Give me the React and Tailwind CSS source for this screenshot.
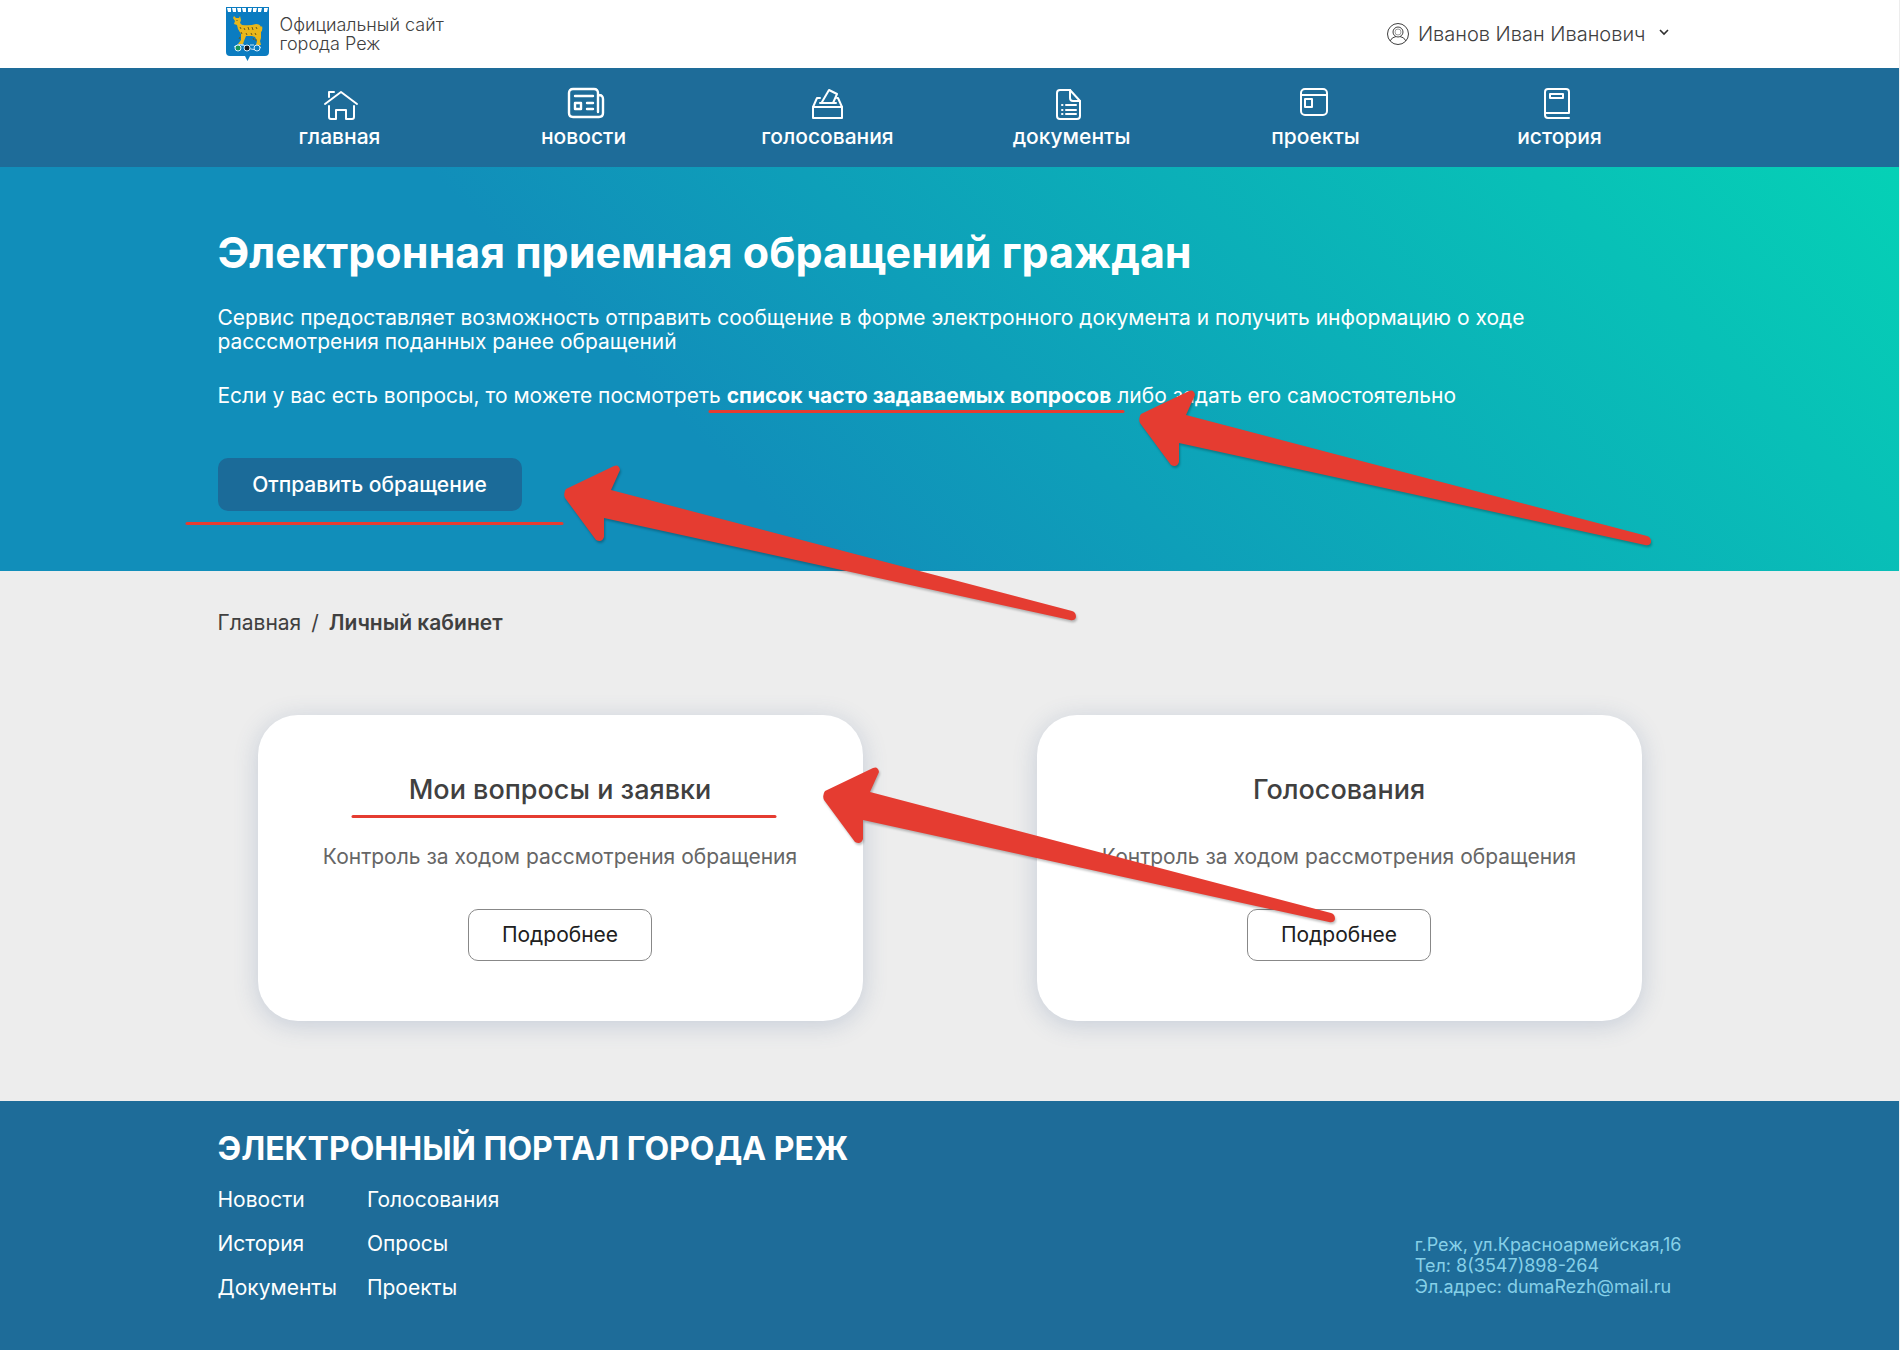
import React from "react";

const NAV = [
  { label: "главная", icon: HomeIcon },
  { label: "новости", icon: NewsIcon },
  { label: "голосования", icon: VoteIcon },
  { label: "документы", icon: DocIcon },
  { label: "проекты", icon: ProjectIcon },
  { label: "история", icon: BookIcon },
];

const CARDS = ["Мои вопросы и заявки", "Голосования"];

const FOOTER_LINKS = [
  ["Новости", "История", "Документы"],
  ["Голосования", "Опросы", "Проекты"],
];

function Icon({ children }) {
  return (
    <svg width="42" height="36" viewBox="-1 0 42 36" fill="none" stroke="white" strokeWidth="2" strokeLinecap="round" strokeLinejoin="round" aria-hidden="true">
      {children}
    </svg>
  );
}

function HomeIcon() {
  return (
    <Icon>
      <path d="M5 19 21 7 37 19" />
      <path d="M9 12V7h5" />
      <path d="M9 21v11q0 2 2 2h5V25h10v9h6q2 0 2-2V21" />
    </Icon>
  );
}

function NewsIcon() {
  return (
    <Icon>
      <path d="M34 27V8q0-4-4-4H9Q5 4 5 8v20q0 4 4 4h26q4 0 4-4V14q0-4-4-4" strokeWidth="2.4" />
      <path d="M11 11h18M23 18h6M23 24h6" strokeWidth="2.4" />
      <path d="M11 18h6v6h-6z" strokeWidth="2.4" />
    </Icon>
  );
}

function VoteIcon() {
  return (
    <Icon>
      <path d="M5 22h29v11H5z" />
      <path d="m5 22 4-9h3M34 22l-4-9h-1M12 18h16" />
      <path d="m14 17 7-12 8 4-4 9" />
    </Icon>
  );
}

function DocIcon() {
  return (
    <Icon>
      <path d="M18 5H8Q5 5 5 8v23q0 3 3 3h17q3 0 3-3V16L18 5" />
      <path d="M18 5v8q0 3 3 3h7M14 20h10M14 25h10M14 29h10M10 20h.500M10 25h.500M10 29h.500" />
    </Icon>
  );
}

function ProjectIcon() {
  return (
    <Icon>
      <rect x="5" y="4" width="26" height="26" rx="4" />
      <path d="M5 10h26" />
      <path d="M9 14h7v8H9z" />
    </Icon>
  );
}

function BookIcon() {
  return (
    <Icon>
      <path d="M29 28V7q0-3-3-3H8Q5 4 5 7v23q0 3 3 3h21M6 28h23" />
      <path d="M10 9h13v4H10z" />
    </Icon>
  );
}

function Emblem() {
  return (
    <svg width="43" height="54" viewBox="0 0 43 54" aria-hidden="true">
      <path d="M0 0h43v45q0 4-4 4H24l-2.500 5-2.500-5H4q-4 0-4-4z" fill="#0b7cc1" />
      <path d="M1 1h4v4H2zM6 1h4v4H7zM11 1h4v4h-3zM16 1h4v4h-3zM22 1h4l-1 4h-3zM27 1h4l-1 4h-3zM32 1h4l-1 4h-3zM38 1h4l-1 4h-3z" fill="white" />
      <path d="m7 11 1-2 2 2h3l1-2 1 4-1 3 2 2q8 1 14-1 4 0 5 3l1-1q1 4-1 6v6l-1 3 1 4h-5l1-4-2-4-3-1h-6l-2 5-1 3h-5l3-4v-6l-3-5-1-4-3-1 1-3z" fill="#e9b71a" />
      <path d="m14 20 1 2m3-1 1 2m3-3 1 3m3-3 1 3m3-3 1 2m-16 3 1 2m4-1 1 2m4-2 1 2m3-2 1 2m-16 2-1 2m14-1 1 2m2-1v2M11 13v1" stroke="#6a5a1a" strokeWidth="1" />
      <path d="M15 38h3m6 0h4M8 40q6-5 13 0t14 0" stroke="#c9e4f5" fill="none" />
      <g stroke="#dbeefa" strokeWidth="1" fill="none">
        <circle cx="12" cy="41" r="3" fill="#15965a" />
        <circle cx="21" cy="41" r="3" fill="#171b22" />
        <circle cx="31" cy="41" r="3" fill="#0b7cc1" />
      </g>
    </svg>
  );
}

function Arrow({ x, y }) {
  return (
    <path
      transform={`translate(${x} ${y})`}
      d="M2-5 50-28q5-2 6 4L47-4 508 117q4 1 4 6-1 4-6 3L40 24v19q-2 6-8 3L1 4q-2-5 1-9z"
    />
  );
}

/* Hand-drawn marks that lie over the page */
function Marks() {
  return (
    <svg className="pointer-events-none absolute top-0 left-1/2 -translate-x-1/2" width="1900" height="1350" viewBox="0 0 1900 1350" aria-hidden="true">
      <g stroke="#e53c31" strokeWidth="3" strokeLinecap="round">
        <path d="M710 411.500H1123" />
        <path d="M187 523.500H562" />
        <path d="M353 816.500H775" />
      </g>
      <g fill="#e53c31" className="drop-shadow-[1px_2px_1px_rgba(0,0,0,0.25)]">
        <Arrow x={1139} y={419} />
        <Arrow x={564} y={494} />
        <Arrow x={823} y={796} />
      </g>
    </svg>
  );
}

export default function App() {
  return (
    <div className="relative min-h-screen overflow-hidden bg-[#ededed] pr-px font-[Inter,'Noto_Sans',sans-serif] text-[#404040]">
      <header className="bg-white">
        <div className="mx-auto flex h-[68px] max-w-[1464px] items-center justify-between pr-3 pl-2">
          <a href="#" className="flex items-center gap-[11px]">
            <Emblem />
            <span className="text-[18px] leading-[19px] font-light">
              Официальный сайт
              <br />
              города Реж
            </span>
          </a>
          <button type="button" className="flex items-center gap-2 text-[20px] font-light">
            <svg width="24" height="24" viewBox="0 0 24 24" fill="none" stroke="#404040" strokeWidth="1" aria-hidden="true">
              <circle cx="12" cy="12" r="10.500" />
              <circle cx="12" cy="10" r="5" />
              <circle cx="12" cy="10" r="3" strokeWidth="0.500" />
              <path d="M4 19q2-4 6-4.500m4 0q4 .500 6 4.500" />
            </svg>
            Иванов Иван Иванович
            <svg className="mb-1 ml-1" width="12" height="12" viewBox="0 0 12 12" fill="none" stroke="#303030" strokeWidth="1.6" aria-hidden="true">
              <path d="m2 4 4 4 4-4" />
            </svg>
          </button>
        </div>
      </header>

      <nav className="bg-[#1e6c99] text-white">
        <div className="mx-auto grid h-[99px] max-w-[1464px] grid-cols-6">
          {NAV.map(({ label, icon: Glyph }) => (
            <a key={label} href="#" className="flex flex-col items-center pt-[17px] text-[21px] leading-[24px] font-medium">
              <Glyph />
              <span className="mt-1">{label}</span>
            </a>
          ))}
        </div>
      </nav>

      <section className="bg-[linear-gradient(45deg,#118eba_36%,#05d1b6_100%)] text-white">
        <div className="mx-auto h-[404px] max-w-[1464px] pt-[60px]">
          <h1 className="text-[43px] leading-[50px] font-bold">Электронная приемная обращений граждан</h1>
          <p className="mt-[29px] max-w-[1360px] text-[21px] leading-[24px]">
            Сервис предоставляет возможность отправить сообщение в форме электронного документа и получить информацию о ходе
            <br />
            расссмотрения поданных ранее обращений
          </p>
          <p className="mt-[30px] text-[21px] leading-[24px]">
            Если у вас есть вопросы, то можете посмотреть{" "}
            <a href="#" className="font-bold">список часто задаваемых вопросов</a> либо задать его самостоятельно
          </p>
          <button type="button" className="mt-[50px] h-[53px] w-[304px] rounded-[10px] bg-[#1b6b99] text-[21px] font-medium">
            Отправить обращение
          </button>
        </div>
      </section>

      <main className="mx-auto max-w-[1464px] pt-10 pb-20">
        <div className="flex gap-[10px] text-[21px] leading-[24px]">
          <a href="#">Главная</a>
          <span>/</span>
          <span className="font-semibold">Личный кабинет</span>
        </div>
        <div className="mt-20 flex justify-between px-10">
          {CARDS.map((title) => (
            <article key={title} className="flex h-[306px] w-[605px] flex-col items-center rounded-[40px] bg-white pt-[60px] shadow-[0_4px_24px_rgba(60,90,140,0.22)]">
              <h2 className="text-[27px] leading-[30px] font-medium">{title}</h2>
              <p className="mt-10 text-[21px] leading-[24px] text-[#666]">Контроль за ходом рассмотрения обращения</p>
              <button type="button" className="mt-10 h-[52px] w-[184px] rounded-[10px] border border-[#888] text-[21px] text-[#202020]">
                Подробнее
              </button>
            </article>
          ))}
        </div>
      </main>

      <footer className="bg-[#1e6c99] text-white">
        <div className="mx-auto h-[249px] max-w-[1464px] pt-[30px]">
          <h2 className="text-[32px] leading-[36px] font-bold">ЭЛЕКТРОННЫЙ ПОРТАЛ ГОРОДА РЕЖ</h2>
          <div className="mt-[21px] flex items-end justify-between">
            <div className="flex gap-[30px] text-[21px] leading-[24px]">
              {FOOTER_LINKS.map((links) => (
                <div key={links[0]} className="flex flex-col gap-5">
                  {links.map((link) => (
                    <a key={link} href="#">{link}</a>
                  ))}
                </div>
              ))}
            </div>
            <address className="mb-[3px] text-[18px] leading-[21px] text-[#86d0e8] not-italic">
              г.Реж, ул.Красноармейская,16
              <br />
              Тел: 8(3547)898-264
              <br />
              Эл.адрес: dumaRezh@mail.ru
            </address>
          </div>
        </div>
      </footer>

      <Marks />
    </div>
  );
}
